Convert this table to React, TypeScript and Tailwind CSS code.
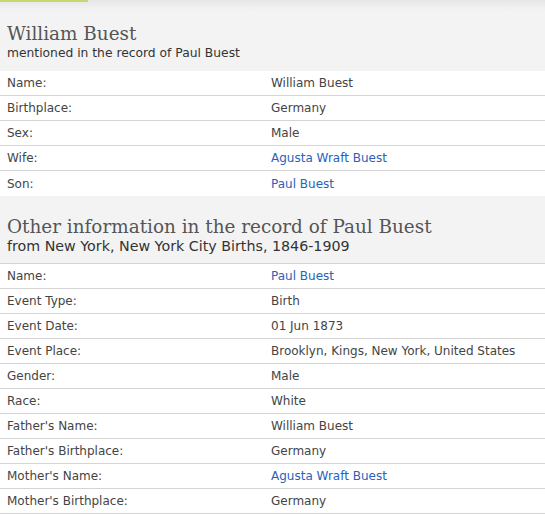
import React from "react";

type Row = { label: string; value: string; link?: boolean };

const rows1: Row[] = [
  { label: "Name:", value: "William Buest" },
  { label: "Birthplace:", value: "Germany" },
  { label: "Sex:", value: "Male" },
  { label: "Wife:", value: "Agusta Wraft Buest", link: true },
  { label: "Son:", value: "Paul Buest", link: true },
];

const rows2: Row[] = [
  { label: "Name:", value: "Paul Buest", link: true },
  { label: "Event Type:", value: "Birth" },
  { label: "Event Date:", value: "01 Jun 1873" },
  { label: "Event Place:", value: "Brooklyn, Kings, New York, United States" },
  { label: "Gender:", value: "Male" },
  { label: "Race:", value: "White" },
  { label: "Father's Name:", value: "William Buest" },
  { label: "Father's Birthplace:", value: "Germany" },
  { label: "Mother's Name:", value: "Agusta Wraft Buest", link: true },
  { label: "Mother's Birthplace:", value: "Germany" },
];

function Table({ rows, lastBorder, topBorder }: { rows: Row[]; lastBorder: boolean; topBorder: boolean }) {
  return (
    <div className={topBorder ? "bg-white border-t border-[#d4d4d4]" : "bg-white"}>
      {rows.map((r, i) => {
        const border = i < rows.length - 1 || lastBorder;
        return (
          <div
            key={i}
            className={
              border
                ? "flex h-[25px] items-center border-b border-[#d4d4d4] text-[12px] text-[#444]"
                : "flex h-[25px] items-center text-[12px] text-[#444]"
            }
          >
            <div className="w-[271px] pl-[7px]">{r.label}</div>
            <div className={r.link ? "text-[#2a62b8]" : "text-[#444]"}>{r.value}</div>
          </div>
        );
      })}
    </div>
  );
}

export default function App() {
  return (
    <div className="w-[545px] h-[514px] overflow-hidden bg-[#f3f3f3] font-['DejaVu_Sans',sans-serif]">
      <div className="h-[10px] bg-gradient-to-b from-[#e6e6e6] to-[#f3f3f3]">
        <div className="h-[2px] w-[88px] bg-[#c6d96f]" />
      </div>
      <div className="px-[7px] pt-[13px] h-[61px]">
        <div className="font-['DejaVu_Serif',serif] text-[18.4px] leading-[22px] text-[#555]">William Buest</div>
        <div className="text-[12.3px] leading-[16px] text-[#333]">mentioned in the record of Paul Buest</div>
      </div>
      <Table rows={rows1} lastBorder={false} topBorder={false} />
      <div className="px-[7px] pt-[20px] h-[67px]">
        <div className="font-['DejaVu_Serif',serif] text-[18.4px] leading-[22px] text-[#555]">
          Other information in the record of Paul Buest
        </div>
        <div className="text-[14.25px] leading-[17px] text-[#333]">from New York, New York City Births, 1846-1909</div>
      </div>
      <Table rows={rows2} lastBorder={true} topBorder={true} />
    </div>
  );
}
